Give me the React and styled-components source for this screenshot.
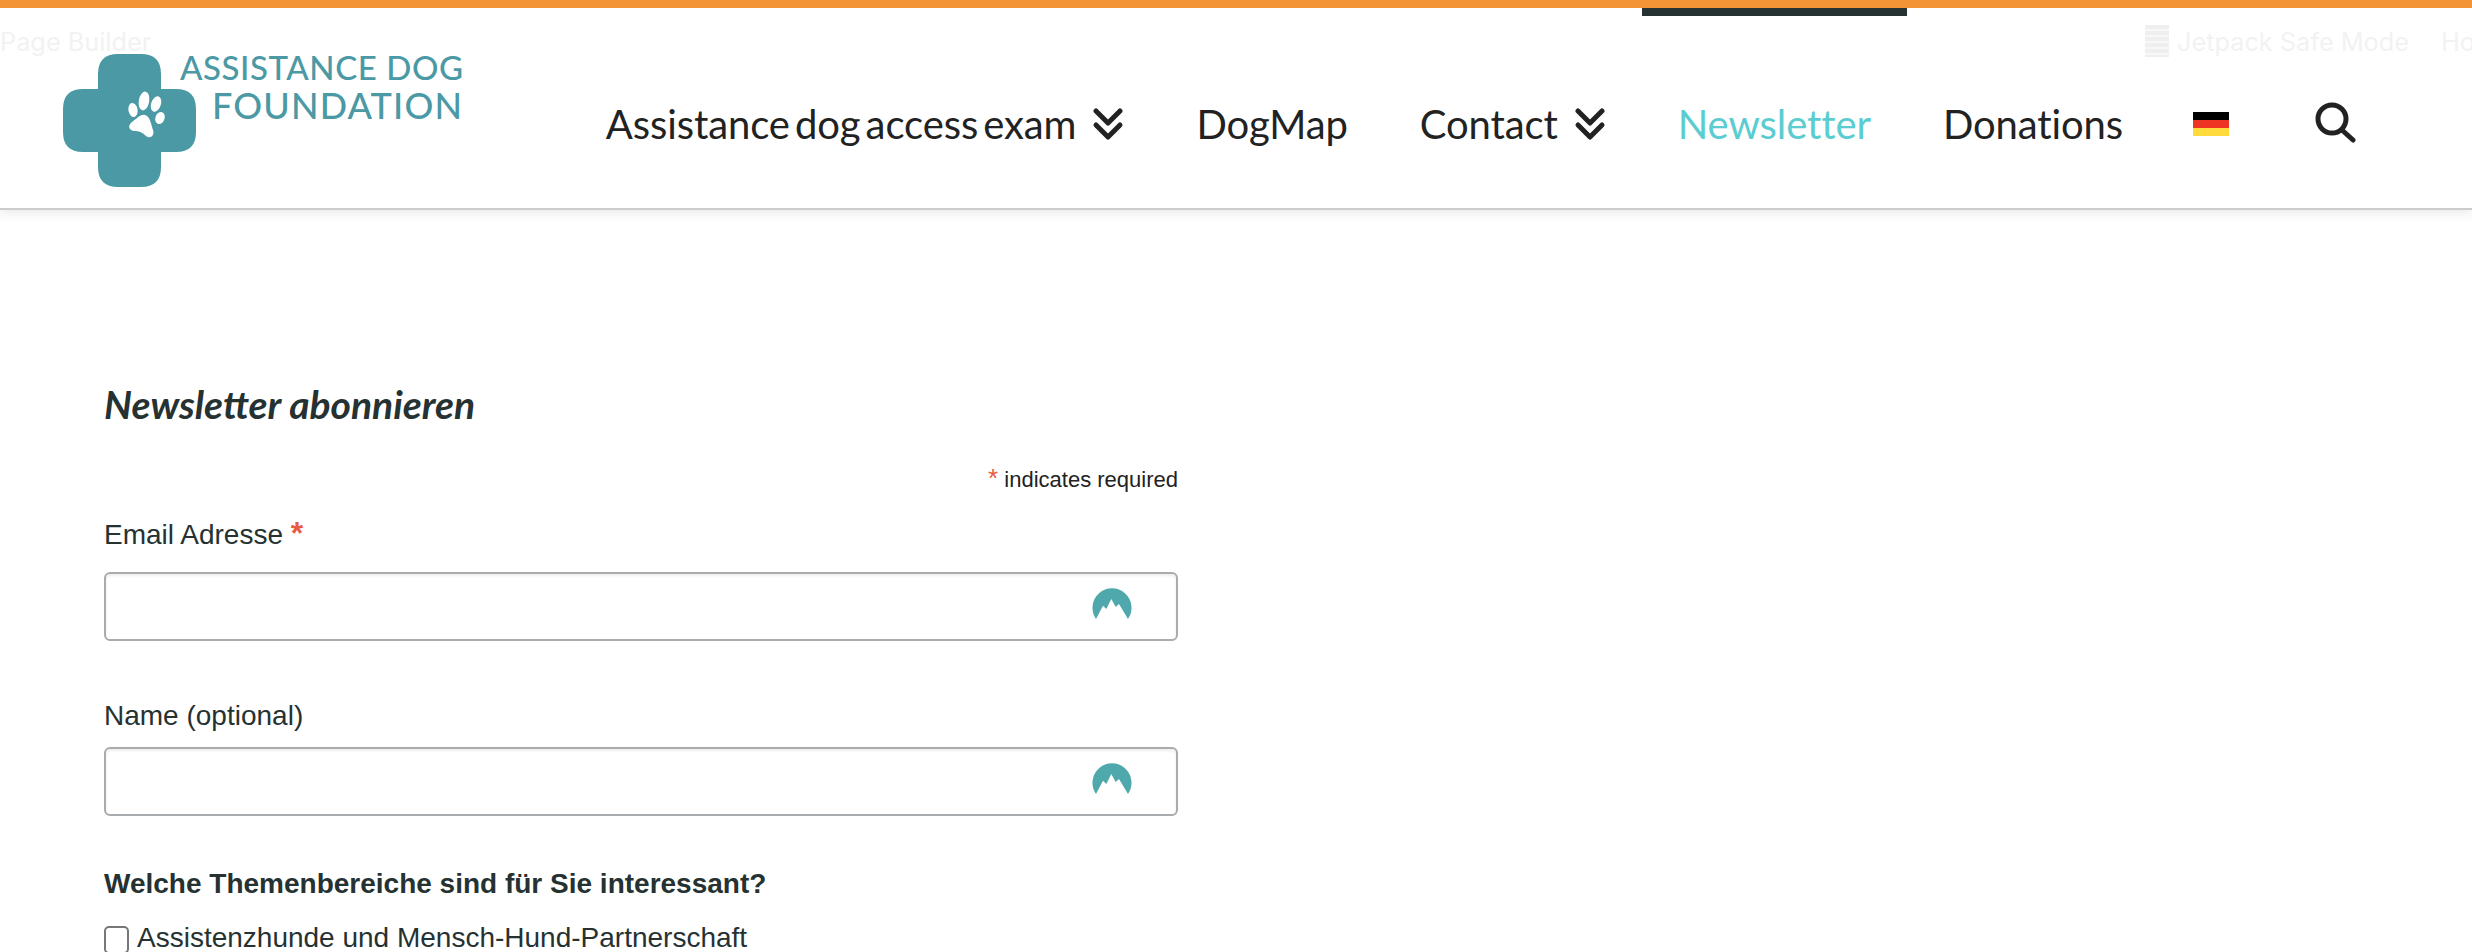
import styled, { createGlobalStyle } from 'styled-components'

const GlobalStyle = createGlobalStyle`
    html, body {
        margin: 0;
        background: #fff;
        overflow: hidden;
    }
    body {
        font-family: "Liberation Sans", Arial, sans-serif;
        color: #263232;
    }
`

function DoubleChevron(){
    return (
        <ChevronIcon viewBox="0 0 32 33" aria-hidden="true">
            <path d="M4 3 L16 15 L28 3" />
            <path d="M4 17 L16 29 L28 17" />
        </ChevronIcon>
    )
}

function Logo(){
    return (
        <LogoSvg viewBox="63 54 400 134" role="img" aria-label="Assistance Dog Foundation">
            <path fill="#4b99a5" d="M118 54 H141 Q161 54 161 74 V89 H176 Q196 89 196 109 V132 Q196 152 176 152 H161 V167 Q161 187 141 187 H118 Q98 187 98 167 V152 H83 Q63 152 63 132 V109 Q63 89 83 89 H98 V74 Q98 54 118 54 Z" />
            <g fill="#fff">
                <ellipse cx="133" cy="110" rx="4.6" ry="7" transform="rotate(-10 133 110)" />
                <ellipse cx="144" cy="101" rx="5.2" ry="9.5" transform="rotate(10 144 101)" />
                <ellipse cx="156" cy="104" rx="4.8" ry="8" transform="rotate(20 156 104)" />
                <ellipse cx="160" cy="118" rx="4.6" ry="6.2" transform="rotate(20 160 118)" />
                <path d="M145 115 C150 116 151 124 153 130 C155 136 150 139 146 136 C142 132 139 131 134 131 C128 130 128 125 132 122 C137 119 140 114 145 115 Z" />
            </g>
            <LogoText x="180" y="80" fontSize="33" textLength="283">ASSISTANCE DOG</LogoText>
            <LogoText x="212" y="119" fontSize="36" textLength="250">FOUNDATION</LogoText>
        </LogoSvg>
    )
}

function PasswordBadge(){
    return (
        <Badge viewBox="0 0 40 32" aria-hidden="true">
            <path d="M4 31 A19.5 19.5 0 1 1 36 31 L27 16 L23.7 19 L19.3 11 L14.3 21 L11 17.7 Z" />
        </Badge>
    )
}

export default function App(){
    return (
        <>
            <GlobalStyle />
            <Header>
                <AdminBar>
                    <AdminLink>Page Builder</AdminLink>
                    <AdminRight>
                        <AdminStripes />
                        <AdminLink>Jetpack Safe Mode</AdminLink>
                        <AdminLink>Ho</AdminLink>
                    </AdminRight>
                </AdminBar>
                <Logo />
                <Nav>
                    <NavItem>Assistance dog access exam<DoubleChevron /></NavItem>
                    <NavItem>DogMap</NavItem>
                    <NavItem>Contact<DoubleChevron /></NavItem>
                    <NavItem $active>Newsletter</NavItem>
                    <NavItem>Donations</NavItem>
                    <NavItem><Flag /></NavItem>
                    <SearchItem>
                        <SearchIcon viewBox="0 0 42 42" aria-hidden="true">
                            <circle cx="17" cy="18" r="14" />
                            <path d="M27 29 L38 39" />
                        </SearchIcon>
                    </SearchItem>
                </Nav>
            </Header>
            <Main>
                <Title>Newsletter abonnieren</Title>
                <RequiredNote><Asterisk>*</Asterisk> indicates required</RequiredNote>
                <EmailField>
                    <Label $gap={21}>Email Adresse <BigAsterisk>*</BigAsterisk></Label>
                    <InputWrap>
                        <TextInput type="email" />
                        <PasswordBadge />
                    </InputWrap>
                </EmailField>
                <Field>
                    <Label $gap={15}>Name (optional)</Label>
                    <InputWrap>
                        <TextInput type="text" />
                        <PasswordBadge />
                    </InputWrap>
                </Field>
                <GroupTitle>Welche Themenbereiche sind für Sie interessant?</GroupTitle>
                <CheckRow>
                    <Checkbox type="checkbox" />
                    Assistenzhunde und Mensch-Hund-Partnerschaft
                </CheckRow>
            </Main>
        </>
    )
}

const Header = styled.header`
    position: relative;
    display: flex;
    height: 200px;
    border-top: 8px solid #f39536;
    padding-left: 63px;
    background: #fff;
    overflow: hidden;
    box-shadow: 0 2px 0 #cccccc, 0 3px 12px rgba(0, 0, 0, 0.12);
`

const AdminBar = styled.div`
    position: absolute;
    top: 17px;
    left: 0;
    right: 0;
    display: flex;
    justify-content: space-between;
    align-items: center;
    height: 32px;
    color: #f2f2f3;
    font-family: "Inter", sans-serif;
    font-size: 25.3px;
`

const AdminRight = styled.div`
    display: flex;
    align-items: center;
    gap: 32px;
    margin-right: -3px;
`

const AdminLink = styled.span`
    white-space: nowrap;
`

const AdminStripes = styled.span`
    width: 24px;
    height: 32px;
    margin-right: -24px;
    background: repeating-linear-gradient(#efefef 0 4px, #f8f8f8 4px 6px);
`

const LogoSvg = styled.svg`
    position: relative;
    flex: none;
    width: 400px;
    height: 134px;
    margin-top: 46px;
    overflow: visible;
`

const LogoText = styled.text`
    fill: #4b99a5;
    font-family: "Lato", sans-serif;
    font-weight: 500;
`

const Nav = styled.nav`
    position: relative;
    display: flex;
    margin-left: auto;
    margin-right: 79px;
    font-family: "Lato", sans-serif;
    font-size: 40px;
    letter-spacing: -0.1px;
    word-spacing: -5px;
    color: #222;
`

const NavItem = styled.div`
    position: relative;
    display: flex;
    align-items: center;
    gap: 16px;
    padding: 32px 36px 0;
    white-space: nowrap;
    color: ${props => props.$active ? '#5bcdd0' : '#222'};

    ${props => props.$active && `
        &::before {
            content: "";
            position: absolute;
            top: 0;
            left: 0;
            right: 0;
            height: 8px;
            background: #263232;
        }
    `}
`

const SearchItem = styled(NavItem)`
    padding-left: 50px;
`

const ChevronIcon = styled.svg`
    width: 32px;
    height: 33px;
    fill: none;
    stroke: #222;
    stroke-width: 5;
    stroke-linecap: round;
    stroke-linejoin: round;
`

const Flag = styled.span`
    display: block;
    width: 36px;
    height: 24px;
    margin-left: -2px;
    background: linear-gradient(#000 0 33%, #ee3524 33% 66%, #ffdc3c 66%);
`

const SearchIcon = styled.svg`
    width: 42px;
    height: 42px;
    margin-top: -4px;
    fill: none;
    stroke: #222;
    stroke-width: 5;
    stroke-linecap: round;
`

const Main = styled.main`
    width: 1074px;
    padding: 174px 0 0 104px;
`

const Title = styled.h1`
    margin: 0;
    font-family: "Lato", sans-serif;
    font-size: 39px;
    font-style: italic;
    font-weight: 700;
    line-height: 44px;
    color: #263232;
`

const RequiredNote = styled.div`
    margin-top: 42px;
    text-align: right;
    font-size: 22px;
    line-height: 24px;
    color: #222;
`

const Asterisk = styled.span`
    color: #e85c41;
    font-size: 26px;
    line-height: 20px;
`

const BigAsterisk = styled.span`
    color: #e85c41;
    font-size: 32px;
    font-weight: 700;
    line-height: 20px;
`

const Field = styled.div`
    margin-bottom: 59px;
`

const EmailField = styled(Field)`
    margin-top: 27px;
`

const Label = styled.label`
    display: block;
    font-size: 28px;
    line-height: 32px;
    margin-bottom: ${props => props.$gap}px;
`

const InputWrap = styled.div`
    position: relative;
`

const TextInput = styled.input`
    display: block;
    box-sizing: border-box;
    width: 100%;
    height: 69px;
    border: 2px solid #a9acaf;
    border-radius: 6px;
    background: #fff;
    box-shadow: inset 0 2px 3px #eee;
    outline: none;
`

const Badge = styled.svg`
    position: absolute;
    top: 16px;
    right: 46px;
    width: 40px;
    height: 32px;
    fill: #4fa9ac;
`

const GroupTitle = styled.div`
    margin: -7px 0 22px;
    font-size: 28px;
    font-weight: 700;
    line-height: 32px;
`

const CheckRow = styled.label`
    display: flex;
    align-items: flex-start;
    gap: 8px;
    font-size: 28px;
    line-height: 32px;
`

const Checkbox = styled.input`
    appearance: none;
    flex: none;
    box-sizing: border-box;
    width: 25px;
    height: 28px;
    margin: 4px 0 0;
    border: 2px solid #777;
    border-radius: 5px;
    background: #fff;
`
